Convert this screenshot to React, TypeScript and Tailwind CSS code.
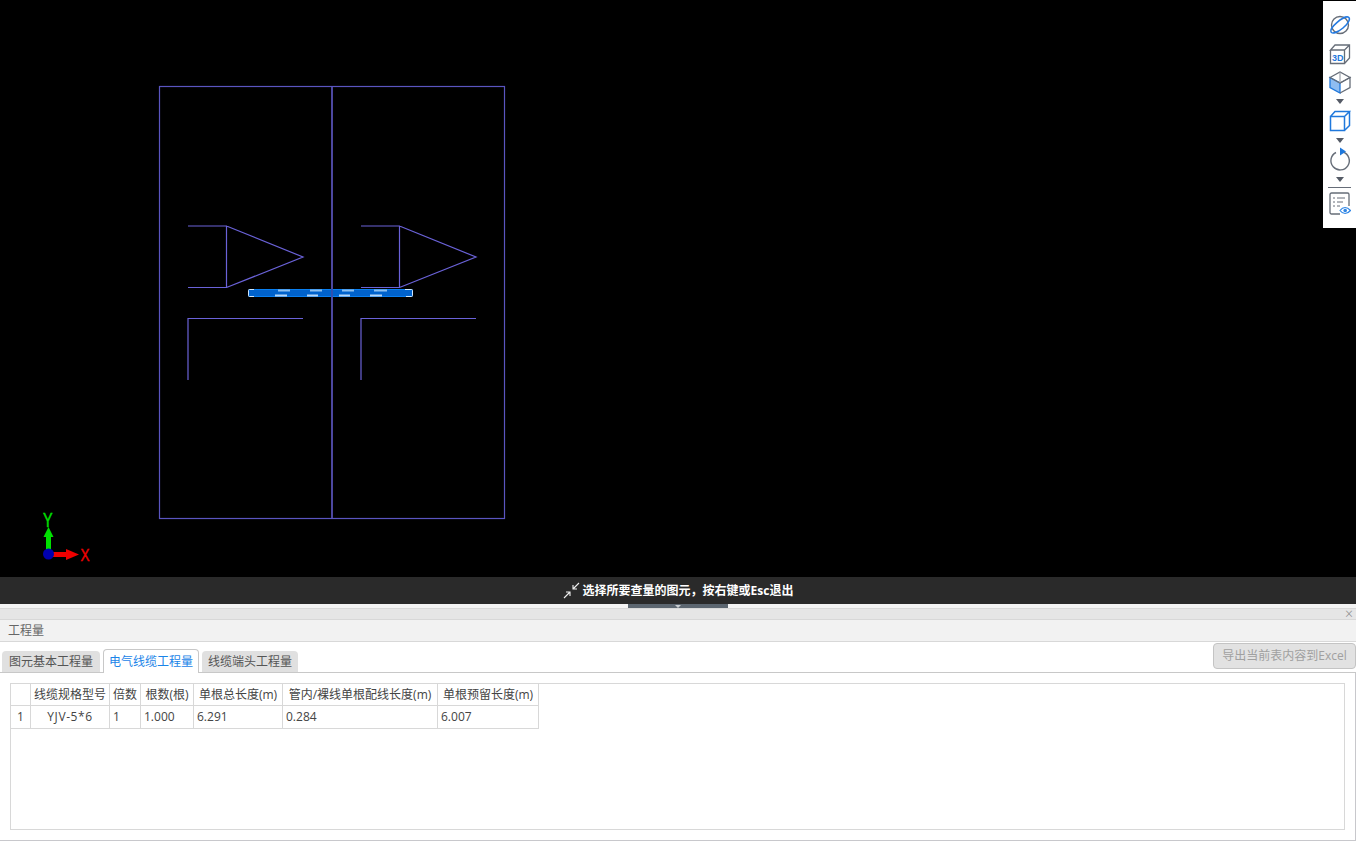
const font = { fontFamily: '"Open Sans", "Noto Sans CJK SC", "Liberation Sans", sans-serif' };

const columns = [
  { label: '', value: '1', width: 'w-[20px]', align: 'text-center' },
  { label: '线缆规格型号', value: 'YJV-5*6', width: 'w-[79px]', align: 'text-center tracking-[0.6px]' },
  { label: '倍数', value: '1', width: 'w-[31px]', align: 'text-left' },
  { label: '根数(根)', value: '1.000', width: 'w-[53px]', align: 'text-left' },
  { label: '单根总长度(m)', value: '6.291', width: 'w-[89px]', align: 'text-left' },
  { label: '管内/裸线单根配线长度(m)', value: '0.284', width: 'w-[155px]', align: 'text-left' },
  { label: '单根预留长度(m)', value: '6.007', width: 'w-[101px]', align: 'text-left' },
];

function Drawing() {
  const left = 'M188 226H226.5V287.5H188M226.5 226L303 257L226.5 287.5M188 380V318.5H303';
  const right = 'M361 226H399.5V287.5H361M399.5 226L476 257L399.5 287.5M361 380V318.5H476';
  return (
    <svg width="1356" height="577" viewBox="0 0 1356 577" className="block">
      <g fill="none" stroke="#6a62d8" strokeWidth="1.2">
        <rect x="159.5" y="86.5" width="345" height="432" stroke="#5a55c0" />
        <path d="M332 87V518" stroke="#4c479f" strokeWidth="2" />
        <path d={left} />
        <path d={right} />
      </g>
      <rect x="248.5" y="289.5" width="164" height="7" rx="1" fill="#0062cc" stroke="#0a7ff0" />
      <path d="M248.5 293V290.5Q248.5 289.5 249.5 289.5H254M405 289.5H411.5Q412.5 289.5 412.5 290.5V295.5Q412.5 296.5 411.5 296.5H406M254 296.5H249.5Q248.5 296.5 248.5 295.5V293" fill="none" stroke="#cfe6fc" />
      <path d="M278 290.5H290M310 290.5H322M342 290.5H354M374 290.5H387" stroke="#8cc0f0" strokeWidth="2" />
      <path d="M275 295.5H287M307 295.5H318M339 295.5H350M370 295.5H382" stroke="#b4d6f8" strokeWidth="2" />
      <path d="M332 289V297" stroke="#2f50b0" strokeWidth="2" />
    </svg>
  );
}

function Axis() {
  const letter = { fontFamily: '"Liberation Sans", sans-serif' };
  return (
    <svg width="60" height="60" viewBox="0 -5 60 60" className="absolute left-[35px] top-[505px]">
      <path d="M13.5 26V40" stroke="#00e000" strokeWidth="5" />
      <path d="M13.5 17L18.5 27H8.5Z" fill="#00e000" />
      <path d="M16 44.5H32" stroke="#f00000" strokeWidth="5" />
      <path d="M31 39L44 44.5L31 50Z" fill="#f00000" />
      <circle cx="13.5" cy="44" r="5.5" fill="#0000b0" />
      <text x="0" y="0" fontSize="18" fill="#00e000" stroke="#00e000" strokeWidth="0.4" transform="translate(8 17) scale(0.8 1.15)" style={letter}>Y</text>
      <text x="0" y="0" fontSize="15" fill="#f00000" stroke="#f00000" strokeWidth="0.4" transform="translate(45.5 50.5) scale(0.9 1.1)" style={letter}>X</text>
    </svg>
  );
}

function Caret() {
  return <div className="h-0 w-0 border-x-[4px] border-t-[5px] border-x-transparent border-t-[#555b66]" />;
}

function Toolbar() {
  return (
    <div className="absolute right-0 top-px flex h-[227px] w-[33px] flex-col items-center bg-white">
      <svg width="24" height="24" viewBox="0 0 24 24" className="mt-[12px]">
        <circle cx="12" cy="12" r="8.5" fill="none" stroke="#666d78" strokeWidth="1.4" />
        <path d="M3 19C1 15 15 3 20 4C23 5 21 10 15 15C9 20 4 21 3 19Z" fill="none" stroke="#2379e0" strokeWidth="1.6" />
      </svg>
      <svg width="22" height="22" viewBox="0 0 22 22" className="mt-[6px]">
        <path d="M1.5 7V20.5H15.5V7H1.5L6 2H20.5V15L15.5 20.5M15.5 7L20.5 2" fill="none" stroke="#666d78" strokeWidth="1.3" />
        <text x="3" y="18" fontSize="9" fontWeight="700" fill="#1f78dc" style={{ fontFamily: '"Liberation Sans", sans-serif' }}>3D</text>
      </svg>
      <svg width="24" height="24" viewBox="0 0 24 24" className="mt-[5px]">
        <path d="M2 7.5L12 13V23L2 17.5Z" fill="#8fbdf2" stroke="#1f78dc" strokeWidth="1.3" />
        <path d="M12 13L22 7.5V17.5L12 23" fill="none" stroke="#666d78" strokeWidth="1.3" />
        <path d="M2 7.5L12 2L22 7.5L12 13Z" fill="none" stroke="#666d78" strokeWidth="1.3" />
        <path d="M12 2V13" stroke="#8a909a" />
      </svg>
      <div className="mt-[5px]"><Caret /></div>
      <svg width="22" height="22" viewBox="0 0 22 22" className="mt-[6px]">
        <path d="M1.5 6.5H15.5V20.5H1.5ZM1.5 6.5L6 1.5H20.5L15.5 6.5M20.5 1.5V15.5L15.5 20.5" fill="none" stroke="#1f78dc" strokeWidth="1.5" />
      </svg>
      <div className="mt-[6px]"><Caret /></div>
      <svg width="24" height="24" viewBox="0 0 24 24" className="mt-[4px]">
        <path d="M8 5.5A9.2 9.2 0 1 0 15 5" fill="none" stroke="#666d78" strokeWidth="1.4" />
        <path d="M12 0.5L18 4.5L12 8.5Z" fill="#1f78dc" />
      </svg>
      <div className="mt-[6px]"><Caret /></div>
      <div className="mt-[5px] h-px w-[23px] bg-[#666d78]" />
      <svg width="22" height="24" viewBox="0 0 22 24" className="mt-[4px]">
        <path d="M11 22H2.5A1.5 1.5 0 0 1 1 20.5V2.5A1.5 1.5 0 0 1 2.5 1H18.5A1.5 1.5 0 0 1 20 2.5V14" fill="none" stroke="#666d78" strokeWidth="1.3" />
        <path d="M4 6H6M8 6H16M4 10H6M8 10H14M4 14H6M8 14H11" stroke="#666d78" />
        <path d="M11 18.5C14 14.5 18 14.5 21.5 18.5C18 22.5 14 22.5 11 18.5Z" fill="none" stroke="#2f86e6" strokeWidth="1.2" />
        <circle cx="16.2" cy="18.5" r="1.8" fill="#2f86e6" />
      </svg>
    </div>
  );
}

function Tab({ label, active, narrow }: { label: string; active?: boolean; narrow?: boolean }) {
  if (active) {
    return (
      <div className="relative -mb-px flex h-[24px] w-[96px] items-center justify-center rounded-t border border-b-0 border-[#c8c8c8] bg-white text-[12px] text-[#1a84e8]">
        {label}
      </div>
    );
  }
  return (
    <div className={`${narrow ? 'w-[96px]' : 'w-[98px]'} flex h-[21px] items-center justify-center rounded-t bg-[#e0e0e0] text-[12px] text-[#555555]`}>
      {label}
    </div>
  );
}

export default function App() {
  return (
    <div className="flex h-[844px] w-[1356px] flex-col overflow-hidden bg-white" style={font}>
      <div className="relative h-[577px] shrink-0 bg-black">
        <Drawing />
        <Axis />
        <Toolbar />
      </div>

      <div className="flex h-[27px] shrink-0 items-center justify-center gap-[3px] bg-[#2a2a2a] text-[12px] font-bold text-white">
        <svg width="17" height="17" viewBox="0 0 17 17">
          <path d="M16 1L10 7M10 3V7H14M1 16L7 10M3 10H7V14" fill="none" stroke="#f0f0f0" strokeWidth="1.1" />
        </svg>
        <span>选择所要查量的图元，按右键或Esc退出</span>
      </div>

      <div className="flex h-[4px] shrink-0 justify-center bg-[#f4f4f4]">
        <div className="flex h-[5px] w-[100px] justify-center bg-[#5c6670]">
          <div className="mt-[1px] h-0 w-0 border-x-[3px] border-t-[3px] border-x-transparent border-t-[#c8ccd0]" />
        </div>
      </div>

      <div className="flex h-[12px] shrink-0 items-center justify-end border-y border-[#d8d8d8] bg-[#e6e6e6] pr-[3px]">
        <span className="text-[14px] leading-none font-light text-[#8a8a8a]">×</span>
      </div>

      <div className="flex h-[22px] shrink-0 items-center border-b border-[#d8d8d8] bg-[#f2f2f2] pl-[8px] text-[12px] text-[#666666]">
        工程量
      </div>

      <div className="flex h-[31px] shrink-0 items-end justify-between border-b border-[#c8c8c8] pl-[2px]">
        <div className="flex items-end gap-[3px]">
          <Tab label="图元基本工程量" />
          <Tab label="电气线缆工程量" active />
          <Tab label="线缆端头工程量" narrow />
        </div>
        <div className="mb-[3px] flex h-[26px] w-[143px] items-center justify-center rounded border border-[#c4c4c4] bg-[#e2e2e2] text-[12px] text-[#a0a0a0]">
          导出当前表内容到Excel
        </div>
      </div>

      <div className="h-[168px] shrink-0 border-r border-b border-[#c8c8cc] pl-[10px] pr-[10px] pt-[10px]">
        <div className="h-[147px] w-[1335px] border border-[#d8d8d8] bg-white">
          <div className="flex h-[22px] w-fit border-b border-[#d8d8d8]">
            {columns.map((col) => (
              <div
                key={col.label}
                className={`${col.width} flex items-center justify-center border-r border-[#d8d8d8] text-[12px] whitespace-nowrap text-[#444444]`}
              >
                {col.label}
              </div>
            ))}
          </div>
          <div className="flex h-[23px] w-fit border-b border-[#d8d8d8]">
            {columns.map((col) => (
              <div
                key={col.label}
                className={`${col.width} ${col.align} border-r border-[#d8d8d8] px-[3px] text-[12px] leading-[22px] text-[#444444]`}
              >
                {col.value}
              </div>
            ))}
          </div>
        </div>
      </div>
    </div>
  );
}
